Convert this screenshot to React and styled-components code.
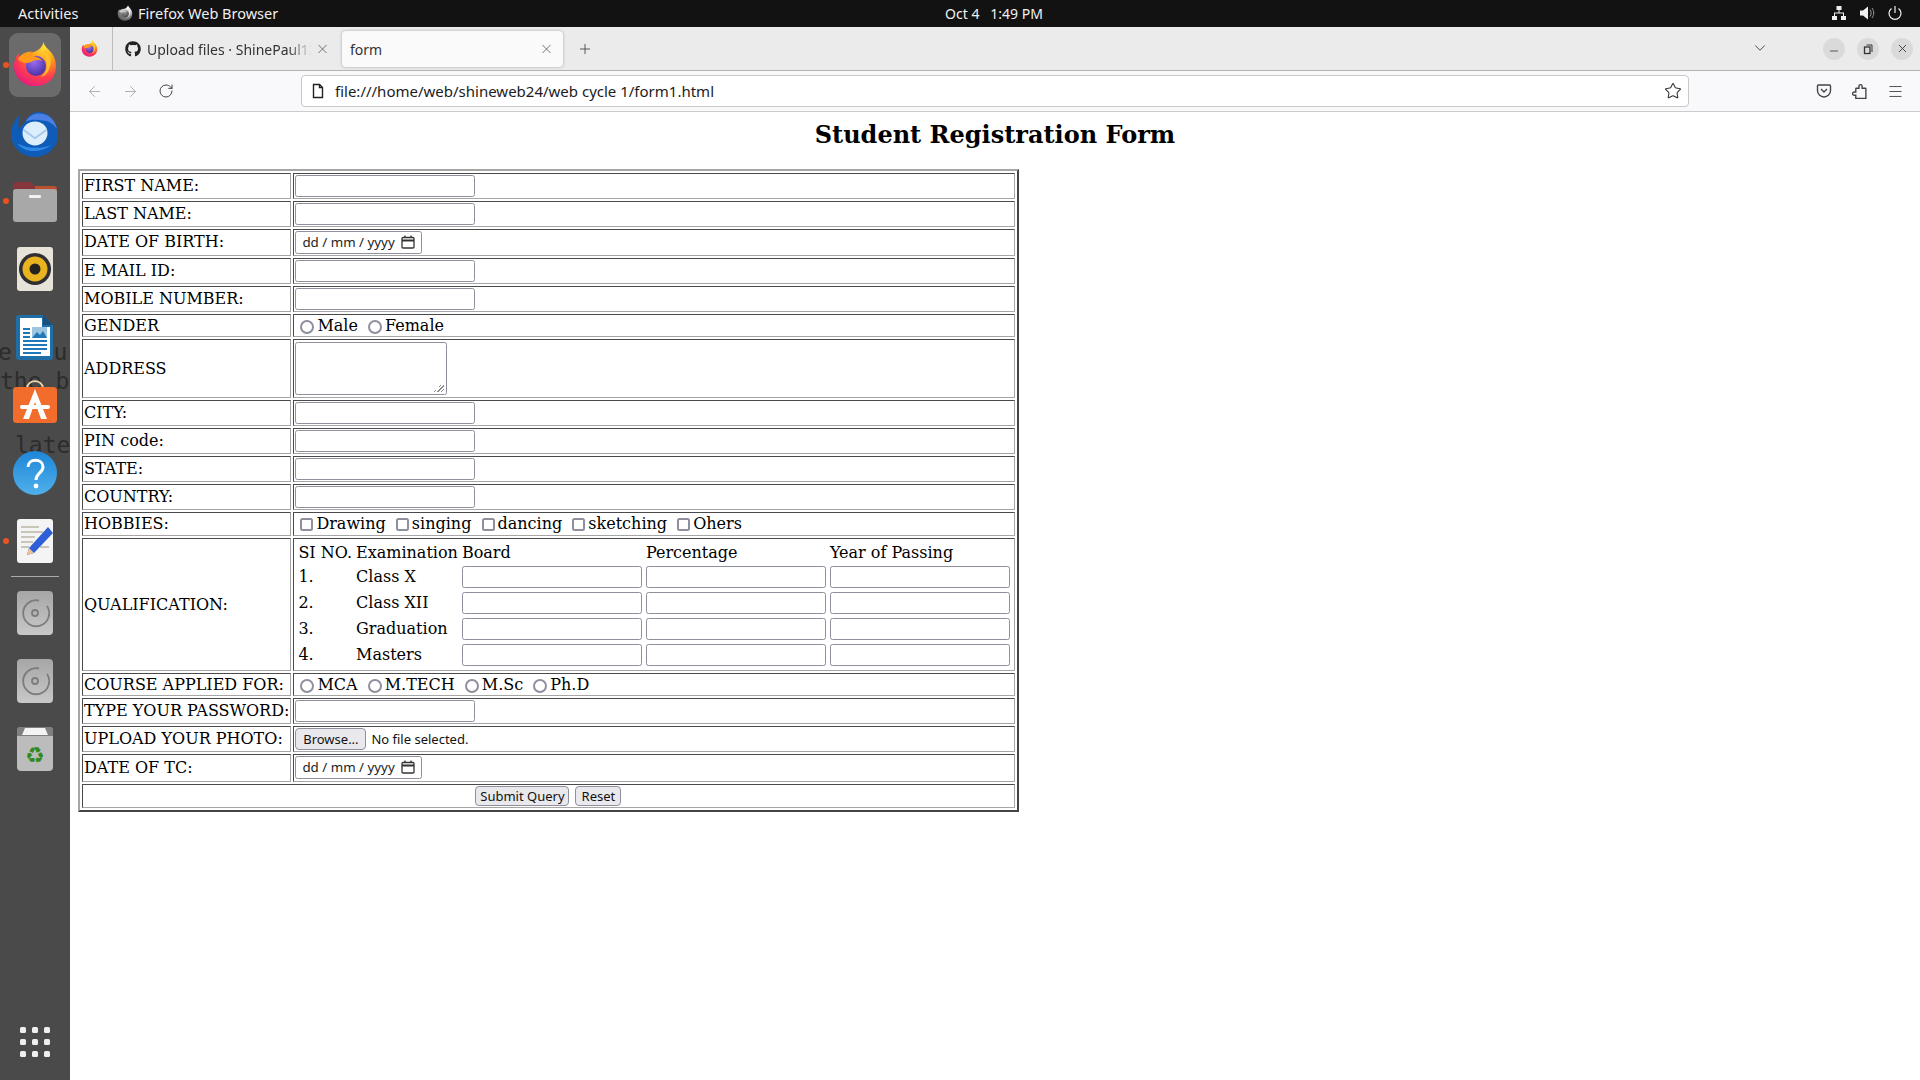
import React from "react";
import styled, { createGlobalStyle } from "styled-components";
import { ArrowLeft, ArrowRight, RotateCw, X, Plus, ChevronDown, Star, Menu, Minus } from "lucide-react";
import { FaGithub } from "react-icons/fa";

const Global = createGlobalStyle`
  html, body { margin: 0; padding: 0; background: #fff; }
  body { font-family: "DejaVu Serif", serif; overflow: hidden; }
  * { box-sizing: border-box; }
`;
const UI = `"Noto Sans", "Open Sans", sans-serif`;

const Screen = styled.div`width:1920px;height:1080px;display:flex;flex-direction:column;overflow:hidden;`;
const TopBar = styled.header`height:27px;background:#121212;color:#f0f0f0;display:flex;align-items:center;font:14.5px ${UI};position:relative;flex:none;padding-bottom:1px;`;
const Activities = styled.span`margin-left:18px;width:99px;`;
const AppMenu = styled.span`display:flex;align-items:center;gap:5px;`;
const Clock = styled.span`position:absolute;left:936px;width:116px;text-align:center;white-space:pre;font-size:14px;`;
const Tray = styled.span`margin-left:auto;display:flex;align-items:center;gap:12px;margin-right:17px;`;

const Desk = styled.div`flex:1;display:flex;min-height:0;`;
const Dock = styled.nav`width:70px;flex:none;background:#4a4a4a;display:flex;flex-direction:column;align-items:center;padding-top:4px;position:relative;overflow:hidden;`;
const GhostText = styled.pre`position:absolute;margin:0;left:${p=>p.$x}px;top:${p=>p.$y}px;font:23px "DejaVu Sans Mono",monospace;color:#2c2c2c;z-index:0;`;
const Slot = styled.div`width:70px;height:68px;flex:none;display:flex;align-items:center;justify-content:center;position:relative;z-index:1;`;
const ActiveTile = styled.div`width:52px;height:64px;border-radius:9px;background:#6b6b6b;display:flex;align-items:center;justify-content:center;padding-bottom:2px;`;
const RunDot = styled.i`position:absolute;left:3px;top:31px;width:6px;height:6px;border-radius:50%;background:#e95420;`;
const Separator = styled.div`width:48px;height:1px;background:#aaa;margin:1px 0 2px;flex:none;z-index:1;`;
const Grid = styled.div`position:absolute;left:20px;top:1000px;display:grid;grid-template-columns:repeat(3,6px);gap:6px;`;
const Dot = styled.i`width:6px;height:6px;border-radius:1.5px;background:#f0f0f0;`;

const Browser = styled.div`flex:1;display:flex;flex-direction:column;min-width:0;`;
const TabBar = styled.div`height:44px;flex:none;background:#ebebeb;border-bottom:1px solid #b4b4b4;display:flex;align-items:stretch;font:14px ${UI};color:#333;`;
const ViewSlot = styled.div`width:43px;border-right:1px solid #bcbcbc;display:flex;align-items:center;justify-content:center;padding-right:3px;`;
const InactiveTab = styled.div`width:222px;display:flex;align-items:center;padding:1px 0 0 12px;position:relative;`;
const TabTitle = styled.span`margin-left:6px;width:165px;overflow:hidden;white-space:nowrap;-webkit-mask-image:linear-gradient(90deg,#000 85%,transparent);mask-image:linear-gradient(90deg,#000 85%,transparent);`;
const TabClose = styled.span`position:absolute;right:${p=>p.$r}px;top:50%;transform:translateY(-50%);display:flex;color:#555;`;
const ActiveTab = styled.div`width:221px;height:36px;margin:4px 0 0 7px;background:#fafafa;border-radius:4px;box-shadow:0 0 3px rgba(0,0,0,.3);display:flex;align-items:center;padding-left:8px;position:relative;`;
const NewTab = styled.div`width:44px;display:flex;align-items:center;justify-content:center;color:#444;`;
const TabSpacer = styled.div`flex:1;`;
const ListAll = styled.div`display:flex;align-items:center;margin-right:54px;margin-bottom:1px;color:#444;`;
const WinBtns = styled.div`display:flex;align-items:center;gap:12px;margin-right:7px;`;
const WinBtn = styled.div`width:22px;height:22px;border-radius:50%;background:#dadada;display:flex;align-items:center;justify-content:center;color:#333;`;

const ToolBar = styled.div`height:41px;flex:none;background:#f9f9fb;border-bottom:1px solid #ccc;display:flex;align-items:center;`;
const NavBtn = styled.span`width:36px;display:flex;justify-content:center;color:${p=>p.$off?"#a8a8ad":"#444"};`;
const NavGroup = styled.div`display:flex;margin-left:6px;`;
const UrlBar = styled.div`width:1388px;height:32px;margin-left:117px;margin-top:-1px;background:#fff;border:1px solid #c8c8c8;border-radius:4px;display:flex;align-items:center;padding-left:8px;font:15px ${UI};color:#1c1b22;position:relative;`;
const UrlText = styled.span`margin-left:9px;`;
const StarBtn = styled.span`position:absolute;right:6px;top:6px;display:flex;color:#333;`;
const ToolEnd = styled.div`display:flex;margin-left:127px;gap:19px;color:#444;`;

const Main = styled.main`flex:1;padding:9px 0 0 8px;background:#fff;min-height:0;`;
const Title = styled.h2`margin:0 0 20px -8px;text-align:center;font:bold 24px/28px "DejaVu Serif",serif;color:#000;`;
const FormTable = styled.table`border-collapse:separate;border-spacing:2px;border:2px solid;border-color:#a6a6a6 #444 #444 #a6a6a6;font:16px/19px "DejaVu Serif",serif;color:#000;`;
const Cell = styled.td`border:1px solid;border-color:#4a4a4a #a6a6a6 #a6a6a6 #4a4a4a;padding:1px;height:${p=>p.$h?p.$h+"px":"auto"};text-align:${p=>p.$center?"center":"left"};white-space:nowrap;`;
const LabelCell = styled(Cell)`width:209px;padding:${p=>p.$up?"0 1px 2px":"1px"};`;
const InnerTable = styled.table`border-collapse:separate;border-spacing:2px;font:inherit;`;
const InnerCell = styled.td`padding:${p=>p.$up?"0 1px 2px":"1px"};white-space:nowrap;`;
const TextBox = styled.input`display:block;width:180px;height:22px;margin:0;padding:0 3px;border:1px solid #8f8f9d;border-radius:2.5px;background:#fff;`;
const Area = styled.textarea`
  display:block;width:152px;height:53px;margin:1px 0;padding:2px;border:1px solid #8f8f9d;border-radius:2.5px;resize:none;
  background:
    linear-gradient(135deg,#fff 50%,transparent 50%) right 2px bottom 2px / 10px 10px no-repeat,
    repeating-linear-gradient(135deg,transparent 0 1.5px,#8a8a8a 1.5px 2.5px) right 2px bottom 2px / 10px 10px no-repeat,
    #fff;
`;
const DateBox = styled.div`width:127px;height:23px;border:1px solid #8f8f9d;border-radius:2.5px;display:flex;align-items:center;padding:0 0 1px 6px;font:13.33px ${UI};color:#222;background:#fff;gap:6px;margin-bottom:${p=>p.$extra?1:0}px;`;
const Choices = styled.div`line-height:19px;height:19px;margin-bottom:${p=>p.$pull?1:0}px;`;
const Radio = styled.input`appearance:none;-webkit-appearance:none;width:14px;height:14px;margin:0 3px 0 5px;border:2px solid #8f8f9d;border-radius:50%;background:#fff;vertical-align:-3px;`;
const Check = styled.input`appearance:none;-webkit-appearance:none;width:13px;height:13px;margin:0 3px 0 5px;border:2px solid #8f8f9d;border-radius:2.5px;background:#fff;vertical-align:-2px;`;
const Btn = styled.button`height:${p=>p.$h}px;width:${p=>p.$w}px;padding:0;background:#e9e9ed;border:1px solid #8f8f9d;border-radius:4px;font:13px ${UI};color:#111;`;
const FileRow = styled.div`display:flex;align-items:center;font:13px ${UI};color:#111;gap:5px;`;
const SubmitRow = styled.div`display:flex;justify-content:center;gap:6px;height:20px;`;

const FirefoxLogo = ({ size = 46, gray }) => (
  <svg width={size} height={size} viewBox="0 0 48 48" style={gray ? { filter: "grayscale(1) brightness(1.2)" } : undefined}>
    <defs>
      <radialGradient id="ffBody" cx="0.72" cy="0.12" r="1">
        <stop offset="0" stopColor="#ffde3a" /><stop offset=".35" stopColor="#ff9a18" /><stop offset=".68" stopColor="#ff3f4e" /><stop offset="1" stopColor="#e31587" />
      </radialGradient>
      <radialGradient id="ffCore" cx=".4" cy=".3" r=".8">
        <stop offset="0" stopColor="#9c6cf0" /><stop offset="1" stopColor="#3f2a9e" />
      </radialGradient>
    </defs>
    <path d="M33 1c1 6 7 8 10 14 4 7 4 17-1 24-5 6-12 8-18 8C11 47 2 37 2 26c0-5 2-10 5-13 0 3 1 5 3 6 2-3 6-6 10-7 6-1 11-4 13-11z" fill="url(#ffBody)" />
    <circle cx="25" cy="26" r="10.500" fill="url(#ffCore)" />
    <path d="M6 19c3-5 8-8 15-8-2 2-2 3-1 4 4 1 9 2 12 6-4-2-9-1-12 1-5 2-10 1-14-3z" fill="#ff9a1c" />
    <path d="M35 9c5 5 7 12 4 19-1 5-5 9-10 10 5-3 8-8 7-14 0-5-2-9-4-11 1-1 2-2 3-4z" fill="#ffc02a" />
  </svg>
);
const Thunderbird = () => (
  <svg width="50" height="50" viewBox="0 0 48 48">
    <path d="M9 7C3 13 0 21 1 28c2 11 11 19 23 19s22-9 22-21C46 14 37 3 25 4c-5 1-9 5-11 10-4 3-5 7-5 10-1-5-1-11 0-17z" fill="#0f5cb8" />
    <path d="M15 13c4-7 11-9 18-7 7 2 11 8 12 14-4-5-8-8-14-8-6-1-11-1-16 1z" fill="#4a7fe6" />
    <path d="M12 24c0-7 6-11 12-11s12 4 12 11-6 12-12 12-12-5-12-12z" fill="#dcedfb" />
    <path d="M13 21l11 8 11-8" fill="none" stroke="#9fc5ea" strokeWidth="1.600" />
    <path d="M7 34c7 9 22 10 33 1-8 4-21 5-33-1z" fill="#2f8ae6" />
  </svg>
);
const Files = () => (
  <svg width="46" height="44" viewBox="0 0 46 44">
    <path d="M1 6a3 3 0 0 1 3-3h15l4 4h19a3 3 0 0 1 3 3v12H1z" fill="#84363a" />
    <path d="M23 7h19a3 3 0 0 1 3 3v8H23z" fill="#b9502f" />
    <rect x="1" y="10" width="44" height="33" rx="3" fill="#a8a8a8" />
    <rect x="17" y="16" width="12" height="3" rx="1.200" fill="#f2f2f2" />
  </svg>
);
const Rhythmbox = () => (
  <svg width="38" height="46" viewBox="0 0 38 46">
    <rect x="1" y="1" width="36" height="44" rx="3" fill="#e7e3d9" />
    <circle cx="19" cy="23" r="16" fill="#2f2f33" />
    <circle cx="19" cy="23" r="12.500" fill="#e9b21f" />
    <circle cx="19" cy="23" r="5.500" fill="#252320" />
  </svg>
);
const Writer = () => (
  <svg width="38" height="47" viewBox="0 0 38 47">
    <path d="M3 1h24l10 10v32a3 3 0 0 1-3 3H3a3 3 0 0 1-3-3V4a3 3 0 0 1 3-3z" fill="#1f6ea6" />
    <path d="M4 4h22v9h8v29H4z" fill="#fff" />
    <path d="M27 1l10 10H27z" fill="#17507d" />
    <path d="M7 15h7M7 19h7M7 23h7M7 27h24M7 31h24M7 35h24M7 39h18" stroke="#1f78b8" strokeWidth="2" />
    <rect x="16" y="13" width="15" height="11" fill="#9dc5e0" />
    <path d="M16 24l5-6 3 3 3-4 4 7z" fill="#1f78b8" />
  </svg>
);
const Software = () => (
  <svg width="46" height="50" viewBox="0 0 46 50">
    <path d="M15 8c1-9 15-9 16 0" fill="none" stroke="#f0d6a8" strokeWidth="2" />
    <rect x="1" y="7" width="44" height="36" rx="3.500" fill="#f26d2c" />
    <path d="M23 9l-12 30h6l6-17 6 17h6z" fill="#fff" />
    <rect x="8" y="25" width="30" height="4" rx="2" fill="#fff" />
  </svg>
);
const Help = () => (
  <svg width="46" height="46" viewBox="0 0 46 46">
    <defs><linearGradient id="helpG" x1="0" y1="0" x2="0" y2="1"><stop offset="0" stopColor="#1e86d8" /><stop offset="1" stopColor="#4fb0ea" /></linearGradient></defs>
    <circle cx="23" cy="23" r="22" fill="url(#helpG)" />
    <path d="M16 17c0-9 15-9 15 0 0 6-7 6-7 13" fill="none" stroke="#fff" strokeWidth="3" />
    <circle cx="24" cy="36" r="2.400" fill="#fff" />
  </svg>
);
const Gedit = () => (
  <svg width="38" height="46" viewBox="0 0 38 46">
    <rect x="1" y="1" width="36" height="44" rx="3" fill="#f4f4f4" />
    <path d="M5 9h18M5 14h22M5 19h14M5 24h12M5 29h8M24 29h9" stroke="#c9c5b8" strokeWidth="2" />
    <path d="M32 9l5 6-19 20-7 2 2-7z" fill="#2f5fd8" />
    <path d="M13 30l5 5-7 2z" fill="#f3c28f" />
  </svg>
);
const Disk = () => (
  <svg width="38" height="46" viewBox="0 0 38 46">
    <defs><linearGradient id="diskG" x1="0" y1="0" x2="0" y2="1"><stop offset="0" stopColor="#a6a6a6" /><stop offset="1" stopColor="#c8c8c8" /></linearGradient></defs>
    <rect x="1" y="1" width="36" height="44" rx="4" fill="url(#diskG)" />
    <path d="M23 10.500a13 13 0 1 0 8 5.500" fill="none" stroke="#7c7c7c" strokeWidth="1.800" />
    <circle cx="19" cy="23" r="3" fill="none" stroke="#7c7c7c" strokeWidth="1.800" />
  </svg>
);
const Trash = () => (
  <svg width="38" height="46" viewBox="0 0 38 46">
    <rect x="1" y="1" width="36" height="44" rx="4" fill="#bcbcbc" />
    <path d="M1 5a4 4 0 0 1 4-4h28a4 4 0 0 1 4 4v5H1z" fill="#7f7f7f" />
    <path d="M6 9l3-7h20l3 7z" fill="#f4f4f4" />
    <text x="19" y="37" textAnchor="middle" fontFamily="DejaVu Sans" fontSize="22" fill="#2f8a1f">♻</text>
  </svg>
);
const NetIcon = () => (
  <svg width="16" height="16" viewBox="0 0 16 16" fill="#f0f0f0">
    <rect x="5.500" y="1" width="5" height="4" /><rect x="1" y="11" width="5" height="4" /><rect x="10" y="11" width="5" height="4" />
    <path d="M7.500 5h1v2.500H13V11h-1V8.500H4V11H3V7.500h4.500z" />
  </svg>
);
const VolIcon = () => (
  <svg width="16" height="16" viewBox="0 0 16 16">
    <path d="M1 5.500h3L9 1.500v13l-5-4H1z" fill="#f0f0f0" />
    <path d="M11 4.500c1.500 2 1.500 5 0 7M13 3c2.300 3 2.300 7 0 10" fill="none" stroke="#999" strokeWidth="1" />
  </svg>
);
const PowerIcon = () => (
  <svg width="16" height="16" viewBox="0 0 16 16" fill="none" stroke="#f0f0f0" strokeWidth="1.200">
    <path d="M8 1v7M4.500 3.500a6 6 0 1 0 7 0" />
  </svg>
);
const PageIcon = () => (
  <svg width="16" height="16" viewBox="0 0 16 16" fill="none" stroke="#222" strokeWidth="1.400">
    <path d="M3.500 1.500h6l3 3v10h-9z" fill="#fff" /><path d="M9.500 1.500v3h3" />
  </svg>
);
const PocketIcon = () => (
  <svg width="16" height="16" viewBox="0 0 16 16" fill="none" stroke="#444" strokeWidth="1.400">
    <path d="M2.500 2h11a1 1 0 0 1 1 1v4.500a6.500 6.500 0 0 1-13 0V3a1 1 0 0 1 1-1z" /><path d="M5 6l3 3 3-3" />
  </svg>
);
const PuzzleIcon = () => (
  <svg width="17" height="17" viewBox="0 0 16 16" fill="none" stroke="#444" strokeWidth="1.300">
    <path d="M9 1.500a1.500 1.500 0 0 1 1.500 1.500v2h3a.5.500 0 0 1 .5.500v9H4.500v-3H3a1.500 1.500 0 0 1 0-3h1.500v-3a.5.500 0 0 1 .5-.500h2.500V3A1.500 1.500 0 0 1 9 1.500z" />
  </svg>
);
const CalIcon = () => (
  <svg width="14" height="14" viewBox="0 0 14 14" fill="none" stroke="#333" strokeWidth="1.300">
    <rect x="1" y="2.500" width="12" height="10.500" rx="1" /><path d="M1 5.500h12" strokeWidth="2" /><path d="M4 .5v2M10 .5v2" />
  </svg>
);
const RestoreIcon = () => (
  <svg width="12" height="12" viewBox="0 0 12 12" fill="none" stroke="#333" strokeWidth="1">
    <rect x="2.500" y="4" width="5.500" height="6.500" strokeWidth="1.300" /><path d="M4.500 2h5.500v7" />
  </svg>
);

const TextRow = ({ label }) => (
  <tr><LabelCell $up>{label}</LabelCell><Cell><TextBox type="text" /></Cell></tr>
);
const DateField = ({ extra }) => (
  <DateBox $extra={extra}><span>dd / mm / yyyy</span><CalIcon /></DateBox>
);
const RadioGroup = ({ items }) => (
  <Choices>{items.map((t, i) => <React.Fragment key={t}><Radio type="radio" name={items[0]} />{t}{i < items.length - 1 ? " " : ""}</React.Fragment>)}</Choices>
);
const quals = ["Class X", "Class XII", "Graduation", "Masters"];

export default function App() {
  return (
    <Screen>
      <Global />
      <TopBar>
        <Activities>Activities</Activities>
        <AppMenu><FirefoxLogo size={16} gray />Firefox Web Browser</AppMenu>
        <Clock>{"Oct 4   1:49 PM"}</Clock>
        <Tray><NetIcon /><VolIcon /><PowerIcon /></Tray>
      </TopBar>
      <Desk>
        <Dock>
          <GhostText $x={-2} $y={312}>{"e   us"}</GhostText>
          <GhostText $x={0} $y={341}>{"the b"}</GhostText>
          <GhostText $x={15} $y={405}>late</GhostText>
          <Slot><RunDot /><ActiveTile><FirefoxLogo /></ActiveTile></Slot>
          <Slot><Thunderbird /></Slot>
          <Slot><RunDot /><Files /></Slot>
          <Slot><Rhythmbox /></Slot>
          <Slot><Writer /></Slot>
          <Slot><Software /></Slot>
          <Slot><Help /></Slot>
          <Slot><RunDot /><Gedit /></Slot>
          <Separator />
          <Slot><Disk /></Slot>
          <Slot><Disk /></Slot>
          <Slot><Trash /></Slot>
          <Grid>{Array.from({ length: 9 }, (_, i) => <Dot key={i} />)}</Grid>
        </Dock>
        <Browser>
          <TabBar>
            <ViewSlot><FirefoxLogo size={17} /></ViewSlot>
            <InactiveTab>
              <FaGithub size={16} color="#222" />
              <TabTitle>Upload files · ShinePaul12</TabTitle>
              <TabClose $r={5}><X size={15} strokeWidth={1.3} /></TabClose>
            </InactiveTab>
            <ActiveTab>
              form
              <TabClose $r={9}><X size={15} strokeWidth={1.3} /></TabClose>
            </ActiveTab>
            <NewTab><Plus size={16} strokeWidth={1.3} /></NewTab>
            <TabSpacer />
            <ListAll><ChevronDown size={18} strokeWidth={1.3} /></ListAll>
            <WinBtns>
              <WinBtn><Minus size={12} strokeWidth={1.6} style={{ marginTop: 5 }} /></WinBtn>
              <WinBtn><RestoreIcon /></WinBtn>
              <WinBtn><X size={13} strokeWidth={1.6} /></WinBtn>
            </WinBtns>
          </TabBar>
          <ToolBar>
            <NavGroup>
              <NavBtn $off><ArrowLeft size={17} strokeWidth={1.3} /></NavBtn>
              <NavBtn $off><ArrowRight size={17} strokeWidth={1.3} /></NavBtn>
              <NavBtn><RotateCw size={16} strokeWidth={1.5} /></NavBtn>
            </NavGroup>
            <UrlBar>
              <PageIcon />
              <UrlText>file:///home/web/shineweb24/web cycle 1/form1.html</UrlText>
              <StarBtn><Star size={18} strokeWidth={1.4} /></StarBtn>
            </UrlBar>
            <ToolEnd>
              <PocketIcon />
              <PuzzleIcon />
              <Menu size={17} strokeWidth={1.3} />
            </ToolEnd>
          </ToolBar>
          <Main>
            <Title>Student Registration Form</Title>
            <FormTable>
              <tbody>
                <TextRow label="FIRST NAME:" />
                <TextRow label="LAST NAME:" />
                <tr><LabelCell $up>DATE OF BIRTH:</LabelCell><Cell><DateField /></Cell></tr>
                <TextRow label="E MAIL ID:" />
                <TextRow label="MOBILE NUMBER:" />
                <tr><LabelCell>GENDER</LabelCell><Cell><RadioGroup items={["Male", "Female"]} /></Cell></tr>
                <tr><LabelCell>ADDRESS</LabelCell><Cell><Area /></Cell></tr>
                <TextRow label="CITY:" />
                <TextRow label="PIN code:" />
                <TextRow label="STATE:" />
                <TextRow label="COUNTRY:" />
                <tr>
                  <LabelCell $up>HOBBIES:</LabelCell>
                  <Cell><Choices $pull>{["Drawing", "singing", "dancing", "sketching", "Ohers"].map((t, i) => <React.Fragment key={t}><Check type="checkbox" />{t}{i < 4 ? " " : ""}</React.Fragment>)}</Choices></Cell>
                </tr>
                <tr>
                  <LabelCell>QUALIFICATION:</LabelCell>
                  <Cell>
                    <InnerTable>
                      <tbody>
                        <tr>
                          <InnerCell>SI NO.</InnerCell><InnerCell>Examination</InnerCell><InnerCell>Board</InnerCell><InnerCell>Percentage</InnerCell><InnerCell>Year of Passing</InnerCell>
                        </tr>
                        {quals.map((q, i) => (
                          <tr key={q}>
                            <InnerCell $up>{i + 1}.</InnerCell><InnerCell $up>{q}</InnerCell>
                            <InnerCell><TextBox type="text" /></InnerCell><InnerCell><TextBox type="text" /></InnerCell><InnerCell><TextBox type="text" /></InnerCell>
                          </tr>
                        ))}
                      </tbody>
                    </InnerTable>
                  </Cell>
                </tr>
                <tr><LabelCell>COURSE APPLIED FOR:</LabelCell><Cell><RadioGroup items={["MCA", "M.TECH", "M.Sc", "Ph.D"]} /></Cell></tr>
                <TextRow label="TYPE YOUR PASSWORD:" />
                <tr><LabelCell $up>UPLOAD YOUR PHOTO:</LabelCell><Cell><FileRow><Btn type="button" $w={71} $h={22}>Browse...</Btn>No file selected.</FileRow></Cell></tr>
                <tr><LabelCell $up>DATE OF TC:</LabelCell><Cell><DateField extra /></Cell></tr>
                <tr><Cell colSpan={2} $center><SubmitRow><Btn type="button" $w={94} $h={20}>Submit Query</Btn><Btn type="button" $w={46} $h={20}>Reset</Btn></SubmitRow></Cell></tr>
              </tbody>
            </FormTable>
          </Main>
        </Browser>
      </Desk>
    </Screen>
  );
}
